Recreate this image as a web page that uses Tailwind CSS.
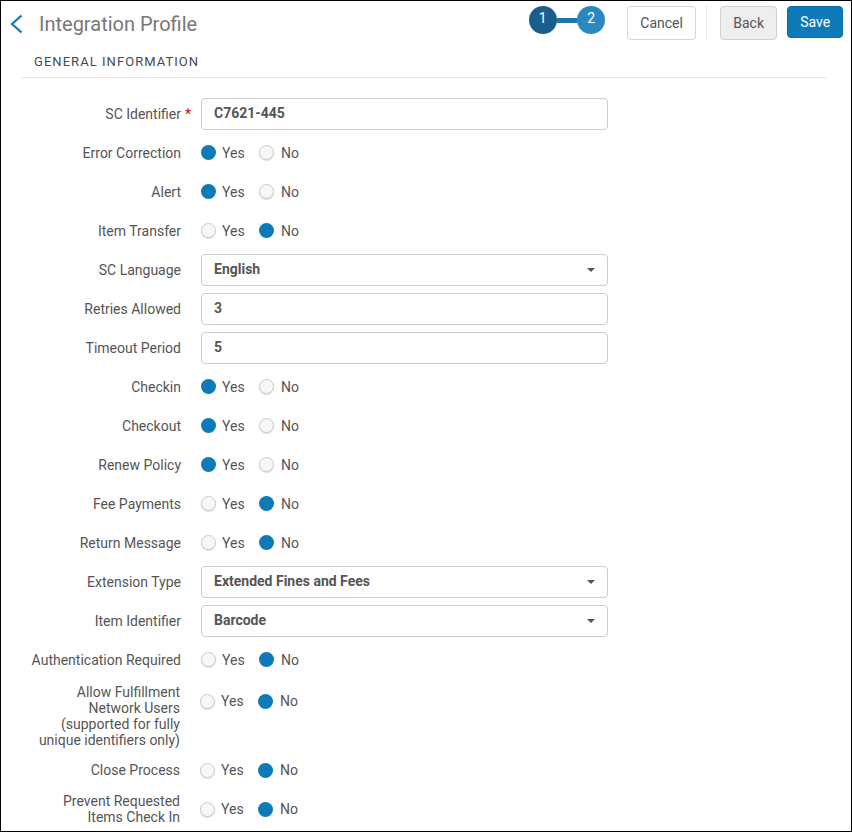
<!DOCTYPE html>
<html lang="en">
<head>
    <meta charset="UTF-8">
    <title>Integration Profile</title>
    <script src="https://cdn.jsdelivr.net/npm/@tailwindcss/browser@4"></script>
</head>
<body class="bg-white font-['Roboto',sans-serif] text-[14px] text-[#555]">
    <div class="h-[832px] w-[852px] overflow-hidden border border-black">
        <!-- Header -->
        <div class="flex h-[45px] items-start px-[8px] pt-[5px]">
            <svg class="mt-[8px] h-[20px] w-[14px] shrink-0" viewBox="0 0 14 20" fill="none" stroke="#0f7ab8" stroke-width="2.2"><path d="M12.5 1.5 3 10l9.5 8.5"/></svg>
            <h1 class="ml-[16px] mt-[4px] whitespace-nowrap text-[20px] leading-[28px] text-[#777]">Integration Profile</h1>
            <div class="ml-[332px] flex shrink-0 items-center">
                <span class="flex h-[28px] w-[28px] items-center justify-center rounded-full bg-[#1b5e8e] pb-[3px] pr-[1px] text-white">1</span>
                <span class="h-[5px] w-[20px] bg-[#1b74ab]"></span>
                <span class="flex h-[28px] w-[28px] items-center justify-center rounded-full bg-[#2a88c0] pb-[3px] text-white">2</span>
            </div>
            <button class="ml-[22px] h-[34px] w-[69px] shrink-0 rounded-[4px] border border-[#d4d4d4] bg-white">Cancel</button>
            <span class="ml-[10px] h-[34px] w-px shrink-0 bg-[#e8e8e8]"></span>
            <button class="ml-[13px] h-[34px] w-[57px] shrink-0 rounded-[4px] border border-[#cfcfcf] bg-[#eeeeee]">Back</button>
            <button class="ml-[10px] h-[32px] w-[56px] shrink-0 rounded-[4px] border border-[#0b6aa3] bg-[#0f7ab8] text-white">Save</button>
        </div>

        <!-- Section -->
        <div class="mx-[21px] w-[804px] border-b border-[#e2e2e2] pb-[7px] pt-[8px]">
            <h2 class="pl-[12px] text-[13px] leading-[16px] tracking-[1.05px] text-[#3f4a55]">GENERAL INFORMATION</h2>
        </div>

        <!-- Form -->
        <div id="form" class="mt-[16px] flex flex-col">
            <div class="flex h-[39px] items-center"><label class="relative w-[180px] pt-[1px] text-right">SC Identifier<span class="absolute left-[184px] text-[#e00000]">*</span></label><div class="ml-[20px] flex h-[32px] w-[407px] items-center rounded-[4px] border border-[#ccc] pl-[12px] font-bold">C7621-445</div></div>
            <div class="flex h-[39px] items-center"><label class="w-[180px] pt-[1px] text-right">Error Correction</label><div class="ml-[20px] flex items-center"><span class="h-[15px] w-[15px] rounded-full bg-[#0f7ab8]"></span><span class="ml-[6px] w-[37px] pt-[1px]">Yes</span><span class="h-[15px] w-[15px] rounded-full border border-[#ccc] bg-[#f7f7f7] shadow-[0_1px_1px_#ddd]"></span><span class="ml-[7px] pt-[1px]">No</span></div></div>
            <div class="flex h-[39px] items-center"><label class="w-[180px] pt-[1px] text-right">Alert</label><div class="ml-[20px] flex items-center"><span class="h-[15px] w-[15px] rounded-full bg-[#0f7ab8]"></span><span class="ml-[6px] w-[37px] pt-[1px]">Yes</span><span class="h-[15px] w-[15px] rounded-full border border-[#ccc] bg-[#f7f7f7] shadow-[0_1px_1px_#ddd]"></span><span class="ml-[7px] pt-[1px]">No</span></div></div>
            <div class="flex h-[39px] items-center"><label class="w-[180px] pt-[1px] text-right">Item Transfer</label><div class="ml-[20px] flex items-center"><span class="h-[15px] w-[15px] rounded-full border border-[#ccc] bg-[#f7f7f7] shadow-[0_1px_1px_#ddd]"></span><span class="ml-[6px] w-[37px] pt-[1px]">Yes</span><span class="h-[15px] w-[15px] rounded-full bg-[#0f7ab8]"></span><span class="ml-[7px] pt-[1px]">No</span></div></div>
            <div class="flex h-[39px] items-center"><label class="w-[180px] pt-[1px] text-right">SC Language</label><div class="ml-[20px] flex h-[32px] w-[407px] items-center justify-between rounded-[4px] border border-[#ccc] pl-[12px] pr-[12px] font-bold">English<span class="h-0 w-0 border-x-[4px] border-t-[4px] border-x-transparent border-t-[#555]"></span></div></div>
            <div class="flex h-[39px] items-center"><label class="w-[180px] pt-[1px] text-right">Retries Allowed</label><div class="ml-[20px] flex h-[32px] w-[407px] items-center rounded-[4px] border border-[#ccc] pl-[12px] font-bold">3</div></div>
            <div class="flex h-[39px] items-center"><label class="w-[180px] pt-[1px] text-right">Timeout Period</label><div class="ml-[20px] flex h-[32px] w-[407px] items-center rounded-[4px] border border-[#ccc] pl-[12px] font-bold">5</div></div>
            <div class="flex h-[39px] items-center"><label class="w-[180px] pt-[1px] text-right">Checkin</label><div class="ml-[20px] flex items-center"><span class="h-[15px] w-[15px] rounded-full bg-[#0f7ab8]"></span><span class="ml-[6px] w-[37px] pt-[1px]">Yes</span><span class="h-[15px] w-[15px] rounded-full border border-[#ccc] bg-[#f7f7f7] shadow-[0_1px_1px_#ddd]"></span><span class="ml-[7px] pt-[1px]">No</span></div></div>
            <div class="flex h-[39px] items-center"><label class="w-[180px] pt-[1px] text-right">Checkout</label><div class="ml-[20px] flex items-center"><span class="h-[15px] w-[15px] rounded-full bg-[#0f7ab8]"></span><span class="ml-[6px] w-[37px] pt-[1px]">Yes</span><span class="h-[15px] w-[15px] rounded-full border border-[#ccc] bg-[#f7f7f7] shadow-[0_1px_1px_#ddd]"></span><span class="ml-[7px] pt-[1px]">No</span></div></div>
            <div class="flex h-[39px] items-center"><label class="w-[180px] pt-[1px] text-right">Renew Policy</label><div class="ml-[20px] flex items-center"><span class="h-[15px] w-[15px] rounded-full bg-[#0f7ab8]"></span><span class="ml-[6px] w-[37px] pt-[1px]">Yes</span><span class="h-[15px] w-[15px] rounded-full border border-[#ccc] bg-[#f7f7f7] shadow-[0_1px_1px_#ddd]"></span><span class="ml-[7px] pt-[1px]">No</span></div></div>
            <div class="flex h-[39px] items-center"><label class="w-[180px] pt-[1px] text-right">Fee Payments</label><div class="ml-[20px] flex items-center"><span class="h-[15px] w-[15px] rounded-full border border-[#ccc] bg-[#f7f7f7] shadow-[0_1px_1px_#ddd]"></span><span class="ml-[6px] w-[37px] pt-[1px]">Yes</span><span class="h-[15px] w-[15px] rounded-full bg-[#0f7ab8]"></span><span class="ml-[7px] pt-[1px]">No</span></div></div>
            <div class="flex h-[39px] items-center"><label class="w-[180px] pt-[1px] text-right">Return Message</label><div class="ml-[20px] flex items-center"><span class="h-[15px] w-[15px] rounded-full border border-[#ccc] bg-[#f7f7f7] shadow-[0_1px_1px_#ddd]"></span><span class="ml-[6px] w-[37px] pt-[1px]">Yes</span><span class="h-[15px] w-[15px] rounded-full bg-[#0f7ab8]"></span><span class="ml-[7px] pt-[1px]">No</span></div></div>
            <div class="flex h-[39px] items-center"><label class="w-[180px] pt-[1px] text-right">Extension Type</label><div class="ml-[20px] flex h-[32px] w-[407px] items-center justify-between rounded-[4px] border border-[#ccc] pl-[12px] pr-[12px] font-bold">Extended Fines and Fees<span class="h-0 w-0 border-x-[4px] border-t-[4px] border-x-transparent border-t-[#555]"></span></div></div>
            <div class="flex h-[39px] items-center"><label class="w-[180px] pt-[1px] text-right">Item Identifier</label><div class="ml-[20px] flex h-[32px] w-[407px] items-center justify-between rounded-[4px] border border-[#ccc] pl-[12px] pr-[12px] font-bold">Barcode<span class="h-0 w-0 border-x-[4px] border-t-[4px] border-x-transparent border-t-[#555]"></span></div></div>
            <div class="flex h-[39px] items-center"><label class="w-[180px] pt-[1px] text-right">Authentication Required</label><div class="ml-[20px] flex items-center"><span class="h-[15px] w-[15px] rounded-full border border-[#ccc] bg-[#f7f7f7] shadow-[0_1px_1px_#ddd]"></span><span class="ml-[6px] w-[37px] pt-[1px]">Yes</span><span class="h-[15px] w-[15px] rounded-full bg-[#0f7ab8]"></span><span class="ml-[7px] pt-[1px]">No</span></div></div>
            <div class="mt-[5px] flex items-start"><label class="w-[179px] text-right leading-[16px]">Allow Fulfillment<br>Network Users<br>(supported for fully<br>unique identifiers only)</label><div class="ml-[20px] mt-[7px] flex items-center"><span class="h-[15px] w-[15px] rounded-full border border-[#ccc] bg-[#f7f7f7] shadow-[0_1px_1px_#ddd]"></span><span class="ml-[6px] w-[37px]">Yes</span><span class="h-[15px] w-[15px] rounded-full bg-[#0f7ab8]"></span><span class="ml-[7px]">No</span></div></div>
            <div class="mt-[3px] flex h-[39px] items-center"><label class="w-[179px] text-right">Close Process</label><div class="ml-[20px] flex items-center"><span class="h-[15px] w-[15px] rounded-full border border-[#ccc] bg-[#f7f7f7] shadow-[0_1px_1px_#ddd]"></span><span class="ml-[6px] w-[37px]">Yes</span><span class="h-[15px] w-[15px] rounded-full bg-[#0f7ab8]"></span><span class="ml-[7px]">No</span></div></div>
            <div class="flex h-[39px] items-center"><label class="w-[179px] pb-[2px] text-right leading-[16px]">Prevent Requested<br>Items Check In</label><div class="ml-[20px] flex items-center"><span class="h-[15px] w-[15px] rounded-full border border-[#ccc] bg-[#f7f7f7] shadow-[0_1px_1px_#ddd]"></span><span class="ml-[6px] w-[37px]">Yes</span><span class="h-[15px] w-[15px] rounded-full bg-[#0f7ab8]"></span><span class="ml-[7px]">No</span></div></div>
        </div>
    </div>
</body>
</html>
